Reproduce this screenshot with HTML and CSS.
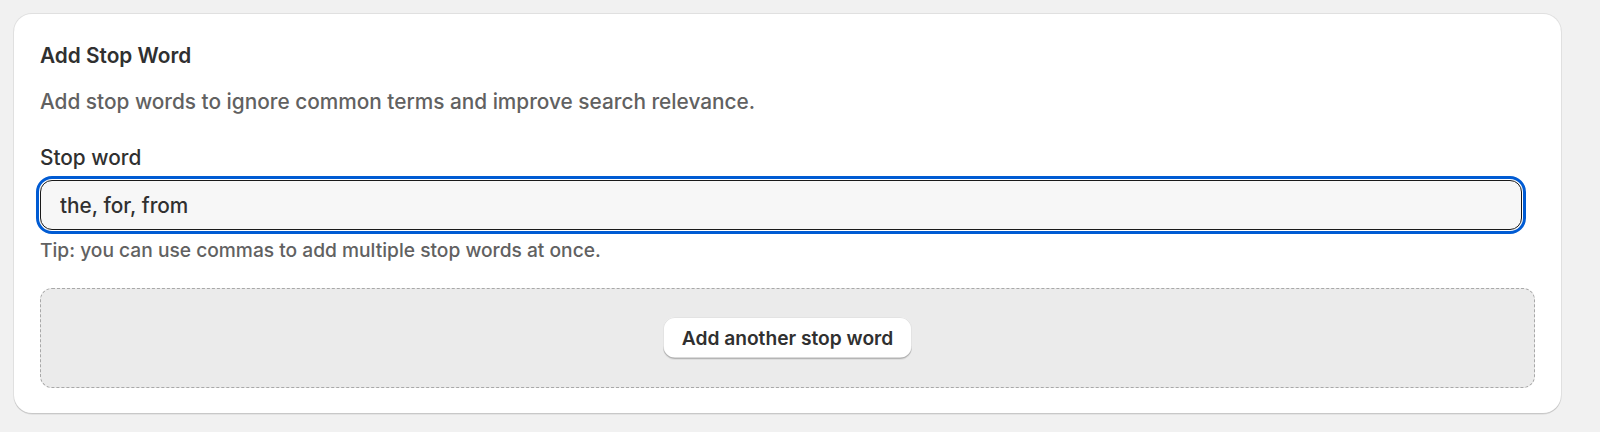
FILE: index.html
```html
<!DOCTYPE html>
<html lang="en">
<head>
<meta charset="utf-8">
<title>Add Stop Word</title>
<link rel="stylesheet" href="styles.css">
</head>
<body>
<section class="card">
  <h2 class="card-title">Add Stop Word</h2>
  <p class="card-desc">Add stop words to ignore common terms and improve search relevance.</p>
  <div class="field">
    <label class="field-label" for="stopword">Stop word</label>
    <input class="field-input is-focused" id="stopword" type="text" value="the, for, from">
    <p class="field-help">Tip: you can use commas to add multiple stop words at once.</p>
  </div>
  <div class="add-zone">
    <button class="btn-secondary" type="button">Add another stop word</button>
  </div>
</section>
</body>
</html>
```

FILE: styles.css
```css
* { box-sizing: border-box; }

html, body {
  margin: 0;
  background: #f1f1f1;
}

body {
  padding: 14px 39px 14px 14px;
  font-family: Inter, "Noto Sans", "Liberation Sans", sans-serif;
  color: #303030;
  font-size: 20.8px;
  font-weight: 450;
  line-height: 32px;
}

.card {
  background: #ffffff;
  border-radius: 18px;
  padding: 26px 26px 25px 26px;
  box-shadow: 0 0 0 1px rgba(0, 0, 0, 0.07), 0 1.5px 0 0 rgba(0, 0, 0, 0.10);
}

.card-title {
  margin: 0;
  font-size: 20.8px;
  line-height: 32px;
  font-weight: 600;
  color: #303030;
}

.card-desc {
  margin: 14px 0 0 0;
  color: #616161;
  font-size: 20.8px;
  line-height: 32px;
}

.field {
  display: flex;
  flex-direction: column;
  margin-top: 24px;
}

.field-label {
  font-size: 20.8px;
  line-height: 32px;
  color: #303030;
  margin-bottom: 6px;
}

.field-input {
  height: 50px;
  margin-right: 13px;
  padding: 0 19px;
  border: 1.5px solid #1a1a1a;
  border-radius: 12px;
  background: #f7f7f7;
  font-family: inherit;
  font-size: 20.8px;
  font-weight: 450;
  color: #303030;
}

.field-input.is-focused {
  outline: 3px solid #005bd3;
  outline-offset: 1px;
}

.field-help {
  margin: 6px 0 0 0;
  font-size: 19.2px;
  line-height: 28px;
  color: #616161;
}

.add-zone {
  margin-top: 24px;
  display: flex;
  justify-content: center;
  align-items: center;
  padding: 28px 0;
  background: #ebebeb;
  border: 1px dashed #a8a8a8;
  border-radius: 12px;
}

.btn-secondary {
  height: 42px;
  padding: 0 19px;
  border: none;
  border-radius: 12px;
  background: #ffffff;
  font-family: inherit;
  font-size: 19.2px;
  font-weight: 600;
  color: #303030;
  box-shadow: inset 0 -1.5px 0 0 #b5b5b5, inset 0 0 0 1px #e3e3e3, 0 1px 0 0 rgba(0, 0, 0, 0.06);
  cursor: pointer;
}
```
